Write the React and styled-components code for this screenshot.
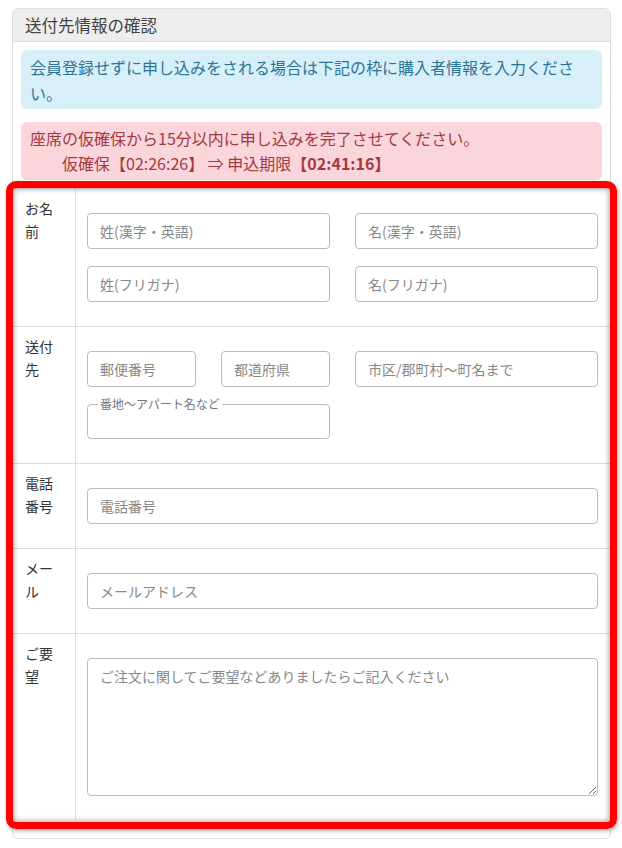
import React from 'react';
import styled, { createGlobalStyle } from 'styled-components';

const GlobalStyle = createGlobalStyle`
  body {
    margin: 0;
    background: #fff;
    font-family: "Noto Sans CJK JP", "Noto Sans", sans-serif;
    color: #333;
  }
`

const Page = styled.div`
  padding: 8px 11px 10px 12px;
`

const Panel = styled.section`
  border: 1px solid #ddd;
  border-radius: 6px;
  background: #fff;
`

const Heading = styled.h2`
  margin: 0;
  padding: 5px 12px;
  background: #ededed;
  border-bottom: 1px solid #ddd;
  border-radius: 5px 5px 0 0;
  font-size: 16.5px;
  line-height: 22px;
  font-weight: normal;
  color: #444;
`

const Body = styled.div`
  padding: 8px 0 18px;
`

const Alert = styled.div`
  margin: 0 8px ${p => p.$gap}px;
  padding: ${p => p.$pad};
  border-radius: 6px;
  font-size: 16px;
  line-height: ${p => p.$lh}px;
  background: ${p => (p.$kind === 'info' ? '#d6eff9' : '#fbd5dc')};
  color: ${p => (p.$kind === 'info' ? '#2f7497' : '#a33a40')};
`

const Indent = styled.div`
  padding-left: 2em;
  b { font-weight: bold; }
`

const FormArea = styled.div`
  position: relative;
`

const Highlight = styled.div`
  position: absolute;
  top: -7px;
  left: -7px;
  right: -7px;
  bottom: -9px;
  border: 7px solid #ff0000;
  border-radius: 10px;
  box-shadow: inset 0 0 6px rgba(0, 0, 0, 0.45), 1px 2px 4px rgba(0, 0, 0, 0.3);
  pointer-events: none;
`

const Row = styled.div`
  display: grid;
  grid-template-columns: 63px 1fr;
  border-top: 1px solid #ddd;
`

const Label = styled.div`
  padding: 8px 12px;
  border-right: 1px solid #ddd;
  font-size: 14px;
  line-height: 23px;
  color: #333;
`

const Fields = styled.div`
  display: grid;
  grid-template-columns: repeat(4, 1fr);
  column-gap: 25px;
  row-gap: 17px;
  padding: 24px 12px 24px 11px;
`

const Input = styled.input`
  grid-column: span ${p => p.$span || 1};
  box-sizing: border-box;
  height: 36px;
  min-width: 0;
  padding: 0 12px;
  border: 1px solid #bbb;
  border-radius: 4px;
  font: 14px "Noto Sans CJK JP", sans-serif;
  color: #333;
  &::placeholder { color: #888; }
`

const Group = styled.fieldset`
  grid-column: span 2;
  margin: -7px 0 0;
  padding: 0 10px;
  min-width: 0;
  border: 1px solid #bbb;
  border-radius: 4px;

  legend {
    padding: 0 2px;
    font-size: 12px;
    line-height: 14px;
    color: #777;
  }
`

const PlainInput = styled.input`
  display: block;
  box-sizing: border-box;
  width: 100%;
  height: 27px;
  border: 0;
  padding: 0 2px;
  font: 14px "Noto Sans CJK JP", sans-serif;
  outline: none;
`

const TextArea = styled.textarea`
  grid-column: span 4;
  box-sizing: border-box;
  height: 138px;
  padding: 7px 12px;
  border: 1px solid #bbb;
  border-radius: 4px;
  font: 14px/20px "Noto Sans CJK JP", sans-serif;
  resize: vertical;
  &::placeholder { color: #888; }
`

const App = () => {
  return (
    <Page>
      <GlobalStyle />
      <Panel>
        <Heading>送付先情報の確認</Heading>
        <Body>
          <Alert $kind="info" $gap={13} $pad="4px 16px 3px 9px" $lh={26}>
            会員登録せずに申し込みをされる場合は下記の枠に購入者情報を入力ください。
          </Alert>
          <Alert $kind="danger" $gap={8} $pad="4px 9px" $lh={25}>
            座席の仮確保から15分以内に申し込みを完了させてください。
            <Indent>
              仮確保【02:26:26】 ⇒ 申込期限<b>【02:41:16】</b>
            </Indent>
          </Alert>

          <FormArea>
            <Row>
              <Label>お名前</Label>
              <Fields>
                <Input $span={2} placeholder="姓(漢字・英語)" />
                <Input $span={2} placeholder="名(漢字・英語)" />
                <Input $span={2} placeholder="姓(フリガナ)" />
                <Input $span={2} placeholder="名(フリガナ)" />
              </Fields>
            </Row>
            <Row>
              <Label>送付先</Label>
              <Fields>
                <Input placeholder="郵便番号" />
                <Input placeholder="都道府県" />
                <Input $span={2} placeholder="市区/郡町村～町名まで" />
                <Group>
                  <legend>番地～アパート名など</legend>
                  <PlainInput />
                </Group>
              </Fields>
            </Row>
            <Row>
              <Label>電話番号</Label>
              <Fields>
                <Input $span={4} placeholder="電話番号" />
              </Fields>
            </Row>
            <Row>
              <Label>メール</Label>
              <Fields>
                <Input $span={4} placeholder="メールアドレス" />
              </Fields>
            </Row>
            <Row>
              <Label>ご要望</Label>
              <Fields>
                <TextArea placeholder="ご注文に関してご要望などありましたらご記入ください" />
              </Fields>
            </Row>
            <Highlight />
          </FormArea>
        </Body>
      </Panel>
    </Page>
  )
}

export default App
